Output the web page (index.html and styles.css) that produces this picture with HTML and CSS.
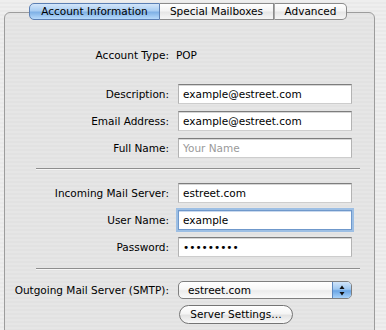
FILE: index.html
```html
<!DOCTYPE html>
<html>
<head>
<meta charset="utf-8">
<link rel="stylesheet" href="styles.css">
</head>
<body>
<div class="window">
  <div class="tabs">
    <div class="tab tab-sel">Account Information</div>
    <div class="tab tab-mid">Special Mailboxes</div>
    <div class="tab tab-last">Advanced</div>
  </div>
  <div class="panel">
    <div class="form">
      <div class="row row-type"><span class="lbl">Account Type:</span><span class="val">POP</span></div>
      <div class="row row-first"><span class="lbl">Description:</span><div class="field">example@estreet.com</div></div>
      <div class="row row-next"><span class="lbl">Email Address:</span><div class="field">example@estreet.com</div></div>
      <div class="row row-next"><span class="lbl">Full Name:</span><div class="field placeholder">Your Name</div></div>
      <div class="sep sep1"></div>
      <div class="row row-after1"><span class="lbl">Incoming Mail Server:</span><div class="field">estreet.com</div></div>
      <div class="row row-next"><span class="lbl">User Name:</span><div class="field focused">example</div></div>
      <div class="row row-next"><span class="lbl">Password:</span><div class="field dots">•••••••••</div></div>
      <div class="sep sep2"></div>
      <div class="row row-after2"><span class="lbl">Outgoing Mail Server (SMTP):</span>
        <div class="popup"><span class="popup-text">estreet.com</span>
          <span class="popup-arrows"><svg width="18" height="17" viewBox="0 0 18 17"><path d="M9 3.5 L11.5 7 L6.5 7 Z" fill="#111"/><path d="M9 13.5 L11.5 10 L6.5 10 Z" fill="#111"/></svg></span>
        </div>
      </div>
      <div class="row row-btn"><span class="lbl"></span><div class="button">Server Settings…</div></div>
    </div>
  </div>
</div>
</body>
</html>
```

FILE: styles.css
```css
html, body {
  margin: 0;
  padding: 0;
}
body {
  width: 386px;
  height: 330px;
  overflow: hidden;
  background: #ececec repeating-linear-gradient(0deg, #eeeeee 0, #eeeeee 2px, #e9e9e9 2px, #e9e9e9 4px);
  font-family: "DejaVu Sans", Verdana, sans-serif;
  font-size: 10.5px;
  color: #000;
}
.window {
  padding: 3px 0 0 4px;
}
.tabs {
  position: relative;
  z-index: 1;
  display: flex;
  margin-left: 25px;
  height: 17px;
}
.tab {
  box-sizing: border-box;
  height: 17px;
  line-height: 15px;
  text-align: center;
  border: 1px solid #8b8b8b;
  background: linear-gradient(#ffffff 0%, #f4f4f4 45%, #e6e6e6 55%, #f6f6f6 100%);
}
.tab-sel {
  width: 131px;
  border-radius: 5px 0 0 5px;
  border-color: #5b7fb3;
  background: linear-gradient(#d3e6fa 0%, #a9cdf2 45%, #7fb1e6 55%, #b7dafb 100%);
}
.tab-mid {
  width: 114px;
  border-left: none;
}
.tab-last {
  width: 73px;
  border-left: 1px solid #a8a8a8;
  border-radius: 0 5px 5px 0;
}
.panel {
  box-sizing: border-box;
  margin-top: -8px;
  width: 371px;
  height: 330px;
  border: 1px solid #9c9c9c;
  border-radius: 6px 6px 0 0;
  background: #e4e4e4 repeating-linear-gradient(0deg, #e6e6e6 0, #e6e6e6 2px, #e2e2e2 2px, #e2e2e2 4px);
}
.form {
  display: flex;
  flex-direction: column;
  padding-top: 32px;
}
.row {
  display: flex;
  align-items: center;
  column-gap: 9px;
  height: 20px;
}
.lbl {
  width: 164px;
  text-align: right;
  white-space: nowrap;
}
.val {
  margin-left: -2px;
}
.row-first { margin-top: 19px; }
.row-next { margin-top: 7px; }
.row-after1 { margin-top: 13px; }
.row-after2 { margin-top: 11px; height: 18px; }
.row-btn { margin-top: 6px; height: 19px; }
.field {
  box-sizing: border-box;
  width: 174px;
  height: 20px;
  line-height: 18px;
  padding-left: 4px;
  background: #fff;
  border: 1px solid #b3b3b3;
  border-top-color: #7d7d7d;
  border-bottom-color: #cdcdcd;
  box-shadow: inset 0 1px 0 #d6d6d6;
  white-space: nowrap;
}
.placeholder {
  color: #9a9a9a;
}
.focused {
  border-color: #6f98cb;
  box-shadow: 0 0 0 2px #9dbfe4, inset 0 1px 0 #c9d9ee;
}
.dots {
  letter-spacing: 0;
}
.sep {
  margin-left: 31px;
  width: 324px;
  border-top: 1px solid #8e8e8e;
  border-bottom: 1px solid #f6f6f6;
}
.sep1 { margin-top: 10px; }
.sep2 { margin-top: 11px; }
.popup {
  box-sizing: border-box;
  display: flex;
  width: 174px;
  height: 18px;
  border: 1px solid #7f7f7f;
  border-radius: 5px;
  overflow: hidden;
  background: linear-gradient(#ffffff 0%, #f7f7f7 45%, #ececec 55%, #fafafa 100%);
}
.popup-text {
  flex: 1;
  padding-left: 9px;
  line-height: 16px;
}
.popup-arrows {
  display: flex;
  width: 18px;
  height: 16px;
  border-left: 1px solid #5d87bd;
  background: linear-gradient(#cfe4fa 0%, #9fc8f1 45%, #6aa5e4 55%, #a7d2fa 100%);
}
.popup-arrows svg {
  display: block;
}
.button {
  box-sizing: border-box;
  width: 114px;
  height: 19px;
  margin-left: 1px;
  line-height: 17px;
  text-align: center;
  border: 1px solid #747474;
  border-radius: 10px;
  background: linear-gradient(#ffffff 0%, #f5f5f5 45%, #e3e3e3 55%, #f8f8f8 100%);
}
```
